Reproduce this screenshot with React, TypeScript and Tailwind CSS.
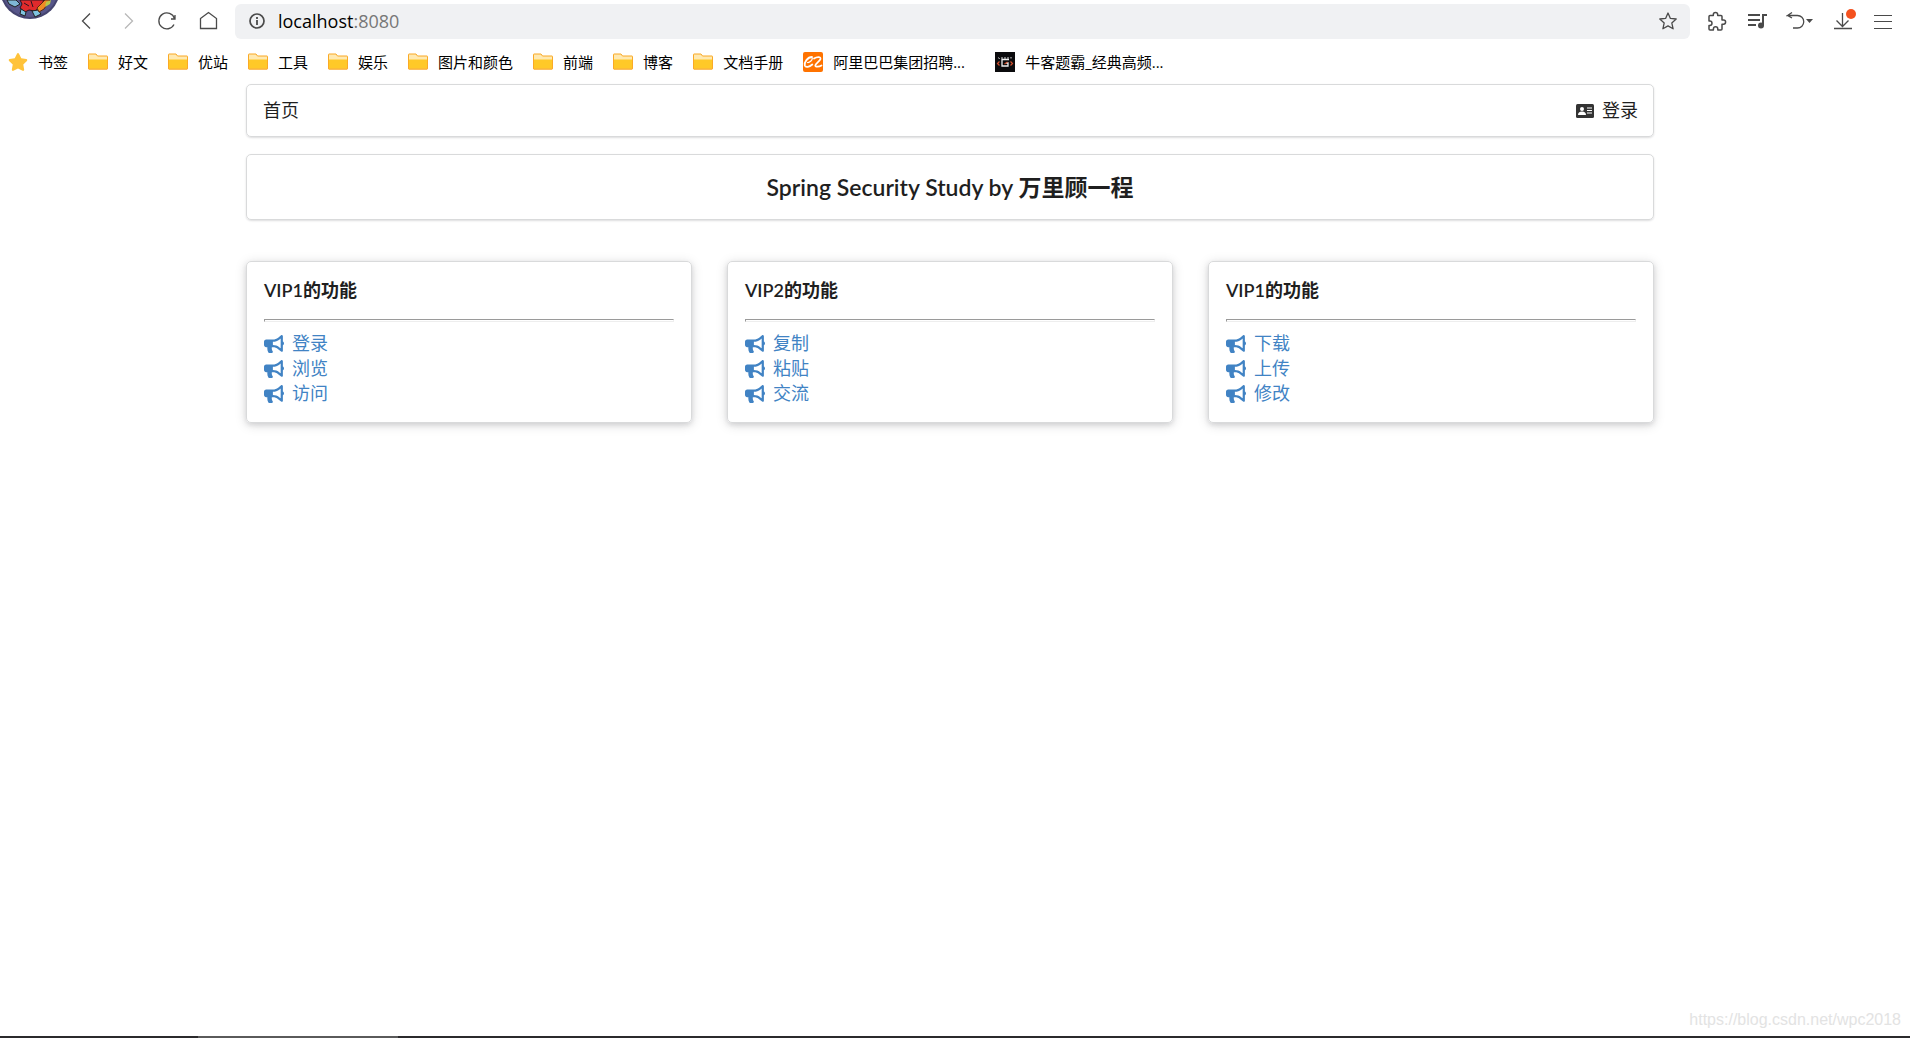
import { FaBullhorn, FaStar } from 'react-icons/fa';

const bookmarks = [
  { label: '好文', kind: 'folder' },
  { label: '优站', kind: 'folder' },
  { label: '工具', kind: 'folder' },
  { label: '娱乐', kind: 'folder' },
  { label: '图片和颜色', kind: 'folder' },
  { label: '前端', kind: 'folder' },
  { label: '博客', kind: 'folder' },
  { label: '文档手册', kind: 'folder' },
  { label: '阿里巴巴集团招聘...', kind: 'alibaba' },
  { label: '牛客题霸_经典高频...', kind: 'nowcoder' },
];

const cards = [
  { title: 'VIP1的功能', links: ['登录', '浏览', '访问'] },
  { title: 'VIP2的功能', links: ['复制', '粘贴', '交流'] },
  { title: 'VIP1的功能', links: ['下载', '上传', '修改'] },
];

function Avatar() {
  return (
    <svg width="60" height="20" viewBox="0 0 60 20" className="shrink-0 self-start">
      <circle cx="30" cy="-11" r="30" fill="#45446f" />
      <circle cx="30" cy="-11" r="28" fill="#57568a" />
      <path d="M7 0h9l4 4-5 3-6-3z" fill="#7fb6d6" stroke="#222" />
      <path d="M20 0h24l-4 7-5 4-6-1-4 2-5-4 2-4z" fill="#e02a2c" stroke="#2a1420" />
      <path d="M24 3l5 3M31 1l2 6" stroke="#2a1420" fill="none" />
      <path d="M21 9l5 3-1 4-5-2zM32 11l6-1 3 4-6 3z" fill="#7fc4e0" stroke="#222" />
      <path d="M37 8l8-8h5l-6 9-5 3z" fill="#f08a24" stroke="#5a2a14" />
      <path d="M46 2l5-2-1 4-5 3z" fill="#b6c84a" />
    </svg>
  );
}

function FolderIcon() {
  return (
    <svg width="20" height="20" viewBox="0 0 20 20" className="shrink-0">
      <path d="M.5 2.5q0-.5.5-.5h7l1.500 2H19q.5 0 .5.500V16.500q0 .5-.5.5H1q-.5 0-.5-.5z" fill="#ffe9b0" stroke="#f9a825" />
      <path d="M1 7.500h18V16.500H1z" fill="#ffc928" />
      <path d="M.5 6v10.500q0 .5.5.5h18q.5 0 .5-.5V6" fill="none" stroke="#fbaa26" />
    </svg>
  );
}

function AlibabaIcon() {
  return (
    <svg width="20" height="20" viewBox="0 0 20 20" className="shrink-0">
      <rect width="20" height="20" rx="2" fill="#ff7300" />
      <path d="M9 5C4.500 5 1 10.500 1.800 13.500c.8 2.500 4.500 1.500 7.500-1" fill="none" stroke="#fff" strokeWidth="1.800" strokeLinecap="round" />
      <path d="M4.500 10.500c2 .3 5-2 4.800-4.500" fill="none" stroke="#fff" strokeWidth="1.200" strokeLinecap="round" />
      <path d="M11 6.500c3-2 7-2 6.500.5-.5 2-5 4.500-5.200 6.500-.1 1.700 3.700 1.500 6.200 0" fill="none" stroke="#fff" strokeWidth="1.700" strokeLinecap="round" />
    </svg>
  );
}

function NowcoderIcon() {
  return (
    <svg width="20" height="20" viewBox="0 0 20 20" className="shrink-0">
      <rect width="20" height="20" fill="#0b0b0d" />
      <path d="M14 7.500H7v6.500h6v-3h-2" fill="none" stroke="#f0f0f0" strokeWidth="1.300" />
      <path d="M7 5v2M10 5v2M13 5v2M16 5v1.500M3.500 5.500l1 1.500" stroke="#ddd" />
      <path d="M4.500 9.500l-2 2 2 2M15.500 9.500l2 2-2 2M9.500 12l3-2" fill="none" stroke="#d2502e" strokeWidth="1.200" />
    </svg>
  );
}

function BookmarkIcon({ kind }: { kind: string }) {
  if (kind === 'alibaba') return <AlibabaIcon />;
  if (kind === 'nowcoder') return <NowcoderIcon />;
  return <FolderIcon />;
}

function Toolbar() {
  return (
    <div className="flex items-center h-[42px] text-[#4a4a4a]">
      <Avatar />

      {/* navigation buttons */}
      <div className="flex items-center gap-5 pl-4 pr-[17px]">
        <button type="button" aria-label="Back">
          <svg width="20" height="20" viewBox="0 0 20 20" fill="none" stroke="currentColor" strokeWidth="1.300">
            <path d="M14 2.500L6.500 10l7.500 7.500" />
          </svg>
        </button>
        <button type="button" aria-label="Forward" className="text-[#b8b8b8]">
          <svg width="20" height="20" viewBox="0 0 20 20" fill="none" stroke="currentColor" strokeWidth="1.300">
            <path d="M9 2.500l7.500 7.500L9 17.500" />
          </svg>
        </button>
        <button type="button" aria-label="Reload">
          <svg width="22" height="20" viewBox="0 0 22 20" fill="none" stroke="currentColor" strokeWidth="1.300">
            <path d="M18 13.500A8 8 0 1 1 18.500 7.500M19 4v4h-4" />
          </svg>
        </button>
        <button type="button" aria-label="Home">
          <svg width="20" height="20" viewBox="0 0 20 20" fill="none" stroke="currentColor" strokeWidth="1.300">
            <path d="M2.500 7.500l8-6 8 6v10h-16z" />
          </svg>
        </button>
      </div>

      {/* address bar */}
      <div className="flex flex-1 items-center h-[35px] rounded-md bg-[#f0f1f3] pl-[13px] pr-3 gap-3">
        <svg width="18" height="18" viewBox="0 0 18 18" className="shrink-0">
          <circle cx="9" cy="9" r="7" fill="none" stroke="currentColor" strokeWidth="1.700" />
          <path d="M9 8v5M9 5v2" stroke="currentColor" strokeWidth="1.800" />
        </svg>
        <button type="button" className="flex-1 text-left text-lg leading-6 text-black font-['Open_Sans',sans-serif]">
          localhost<span className="text-[#777]">:8080</span>
        </button>
        <button type="button" aria-label="Bookmark this page">
          <svg width="20" height="20" viewBox="0 0 20 20" fill="none" stroke="currentColor" strokeWidth="1.300" strokeLinejoin="round">
            <path d="M10 2l2.400 5.400 5.800.6-4.400 3.900 1.300 5.900L10 14.900l-5.100 2.900 1.300-5.900L1.800 8l5.800-.6z" />
          </svg>
        </button>
      </div>

      {/* browser actions */}
      <div className="flex items-center gap-[19px] pl-4 pr-[18px]">
        <button type="button" aria-label="Extensions">
          <svg width="22" height="20" viewBox="0 0 22 20" fill="none" stroke="currentColor" strokeWidth="1.500" strokeLinejoin="round">
            <path d="M3 5.500q0-1 1-1h3.300v-.8a2.200 2.200 0 0 1 4.400 0v.8H15q1 0 1 1V9h1.500a2.100 2.100 0 0 1 0 4.200H16V18q0 1-1 1h-3.200v-1a2.200 2.200 0 0 0-4.400 0v1H4q-1 0-1-1v-3.600h.8a2.200 2.200 0 0 0 0-4.400H3z" />
          </svg>
        </button>
        <button type="button" aria-label="Media">
          <svg width="20" height="20" viewBox="0 0 20 20">
            <path d="M1 4h12M1 9h12M1 14h8" stroke="currentColor" strokeWidth="2" />
            <path d="M16 14V4h4" fill="none" stroke="currentColor" strokeWidth="2" />
            <circle cx="14" cy="14.500" r="3" fill="currentColor" />
          </svg>
        </button>
        <button type="button" aria-label="Restore closed tab">
          <svg width="28" height="20" viewBox="0 0 28 20">
            <path d="M6 1.500L1.500 4.500h10a6.200 6.200 0 0 1 0 12.500H7M1.500 4.500L6 7" fill="none" stroke="currentColor" strokeWidth="1.300" />
            <path d="M20 8h7l-3.500 4z" fill="currentColor" />
          </svg>
        </button>
        <button type="button" aria-label="Downloads">
          <svg width="22" height="24" viewBox="0 0 22 24" className="overflow-visible">
            <path d="M9.500 4v13.500M3.500 11.500l6 6 6-6M1 19.500h18" fill="none" stroke="currentColor" strokeWidth="1.300" />
            <circle cx="18" cy="5" r="5" fill="#f4511e" />
          </svg>
        </button>
        <button type="button" aria-label="Menu">
          <svg width="18" height="20" viewBox="0 0 18 20" stroke="currentColor">
            <path d="M0 4.500h18M0 10.500h18M0 17.500h18" />
          </svg>
        </button>
      </div>
    </div>
  );
}

function BookmarksBar() {
  return (
    <nav className="flex items-center gap-5 h-[39px] pl-2 text-[15px] leading-5 text-black whitespace-nowrap overflow-hidden font-['Open_Sans','Noto_Sans_CJK_SC',sans-serif]">
      <a href="#" className="flex items-center gap-[10px]">
        <FaStar size={20} color="#ffc33a" />
        书签
      </a>
      {bookmarks.map((b) => (
        <a
          key={b.label}
          href="#"
          className={b.kind === 'alibaba' ? 'flex items-center gap-[10px] w-[172px]' : 'flex items-center gap-[10px]'}
        >
          <BookmarkIcon kind={b.kind} />
          {b.label}
        </a>
      ))}
    </nav>
  );
}

function FeatureCard({ title, links }: { title: string; links: string[] }) {
  return (
    <section className="rounded-[5px] border border-[#d9dadb] px-[17px] py-4 shadow-[0_2px_5px_0_rgba(34,36,38,0.12),0_2px_12px_0_rgba(34,36,38,0.15)]">
      <h5 className="text-[18px] leading-6 font-semibold text-[#1f1f1f]">{title}</h5>
      <hr className="mt-[17px] mb-[9px] h-[3px] border border-t-[#9a9a9a] border-l-[#9a9a9a] border-r-[#eee] border-b-[#eee]" />
      <ul>
        {links.map((l) => (
          <li key={l} className="h-[25px]">
            <a href="#" className="inline-flex items-center gap-2 text-[18px] leading-[25px] text-[#4183c4]">
              <FaBullhorn size={20} />
              {l}
            </a>
          </li>
        ))}
      </ul>
    </section>
  );
}

export default function App() {
  return (
    <div className="flex min-h-screen flex-col bg-white font-['Lato','Noto_Sans_CJK_SC',sans-serif]">
      <Toolbar />
      <BookmarksBar />

      <div className="w-full pr-[10px] pt-[3px]">
        <main className="mx-auto max-w-[1408px] text-[#1f1f1f]">
          {/* site menu */}
          <nav className="flex items-center justify-between h-[53px] rounded-[5px] border border-[#d9dadb] pl-4 pr-[15px] text-[18px] leading-[25px] shadow-[0_1px_2px_0_rgba(34,36,38,0.15)]">
            <a href="#">首页</a>
            <a href="#" className="flex items-center gap-2">
              <svg width="18" height="14" viewBox="0 0 18 14">
                <rect width="18" height="14" rx="1.500" fill="#333" />
                <circle cx="6" cy="5" r="2" fill="#fff" />
                <path d="M2 11q0-3.500 4-3.500T10 11zM11 3.500h5v1h-5zM11 6h5v1h-5zM11 8.500h5v1h-5z" fill="#fff" />
              </svg>
              登录
            </a>
          </nav>

          <header className="mt-[17px] flex h-[66px] items-center justify-center rounded-[5px] border border-[#d9dadb] shadow-[0_1px_2px_0_rgba(34,36,38,0.15)]">
            <h3 className="text-[23px] leading-7 font-semibold">Spring Security Study by 万里顾一程</h3>
          </header>

          <div className="mt-[41px] grid grid-cols-3 gap-[35px]">
            {cards.map((c, i) => (
              <FeatureCard key={i} title={c.title} links={c.links} />
            ))}
          </div>
        </main>
      </div>

      <footer className="mt-auto">
        <p className="pr-[9px] pb-[6px] text-right text-base leading-5 text-[#e3e3e3] font-['Liberation_Sans',sans-serif]">
          https://blog.csdn.net/wpc2018
        </p>
        {/* edge of the taskbar */}
        <div className="flex h-[2px] bg-[#2b2a2c]">
          <div className="ml-[198px] w-[200px] bg-[#5a5a5a]" />
        </div>
      </footer>
    </div>
  );
}
